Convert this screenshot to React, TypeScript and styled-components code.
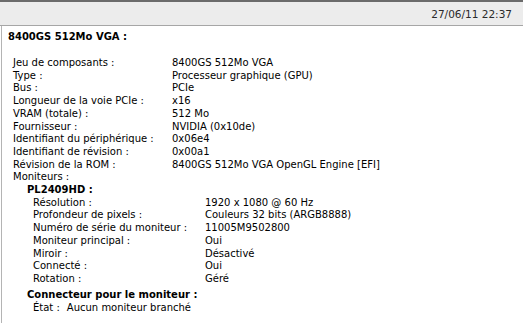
import React from 'react'
import styled, { createGlobalStyle } from 'styled-components'

const GlobalStyle = createGlobalStyle`
  html, body {
    margin: 0;
    padding: 0;
    background: #fff;
  }
  body {
    font-family: 'DejaVu Sans', 'Liberation Sans', sans-serif;
    font-size: 10px;
    color: #000;
  }
`;

type Row = [string, string];

const gpuRows: Row[] = [
  ['Jeu de composants :', '8400GS 512Mo VGA'],
  ['Type :', 'Processeur graphique (GPU)'],
  ['Bus :', 'PCIe'],
  ['Longueur de la voie PCIe :', 'x16'],
  ['VRAM (totale) :', '512 Mo'],
  ['Fournisseur :', 'NVIDIA (0x10de)'],
  ['Identifiant du périphérique :', '0x06e4'],
  ['Identifiant de révision :', '0x00a1'],
  ['Révision de la ROM :', '8400GS 512Mo VGA OpenGL Engine [EFI]'],
];

const displayRows: Row[] = [
  ['Résolution :', '1920 x 1080 @ 60 Hz'],
  ['Profondeur de pixels :', 'Couleurs 32 bits (ARGB8888)'],
  ['Numéro de série du moniteur :', '11005M9502800'],
  ['Moniteur principal :', 'Oui'],
  ['Miroir :', 'Désactivé'],
  ['Connecté :', 'Oui'],
  ['Rotation :', 'Géré'],
];

const App = () => (
  <>
    <GlobalStyle />
    <Window>
      <TopBar>
        <Stamp>27/06/11 22:37</Stamp>
      </TopBar>
      <Content>
        <Title>8400GS 512Mo VGA :</Title>
        <Section>
          <Table labelWidth={159} indent={13}>
            {gpuRows.map(([k, v]) => (
              <React.Fragment key={k}>
                <Label>{k}</Label>
                <Value>{v}</Value>
              </React.Fragment>
            ))}
            <Label>Moniteurs :</Label>
            <Value />
          </Table>
          <Heading indent={27}>PL2409HD :</Heading>
          <Table labelWidth={172} indent={33}>
            {displayRows.map(([k, v]) => (
              <React.Fragment key={k}>
                <Label>{k}</Label>
                <Value>{v}</Value>
              </React.Fragment>
            ))}
          </Table>
          <Heading indent={27} spaced>Connecteur pour le moniteur :</Heading>
          <InlineRow indent={33}>
            <Label>État :</Label>
            <Value>Aucun moniteur branché</Value>
          </InlineRow>
        </Section>
      </Content>
    </Window>
  </>
)

const Window = styled.div`
  width: 523px;
  height: 323px;
  display: flex;
  flex-direction: column;
  overflow: hidden;
`;

const TopBar = styled.div`
  height: 23px;
  flex: none;
  display: flex;
  align-items: center;
  justify-content: flex-end;
  padding-right: 11px;
  background: #ececec;
  border-top: 2px solid #6b6b6b;
  border-bottom: 1px solid #a6a6a6;
`;

const Stamp = styled.span`
  font-size: 10.5px;
  color: #2a2a2a;
  padding-top: 1px;
`;

const Content = styled.div`
  flex: 1;
  border-left: 1px solid #b4b4b4;
  margin-left: 1px;
  padding-top: 4px;
`;

const Title = styled.div`
  font-weight: bold;
  padding-left: 6px;
  line-height: 13px;
`;

const Section = styled.div`
  padding-top: 14px;
  line-height: 12.7px;
`;

const Table = styled.div<{ labelWidth: number; indent: number }>`
  display: grid;
  grid-template-columns: ${p => p.labelWidth}px 1fr;
  padding-left: ${p => p.indent - 2}px;
`;

const Label = styled.span`
  white-space: nowrap;
`;

const Value = styled.span`
  white-space: nowrap;
`;

const Heading = styled.div<{ indent: number; spaced?: boolean }>`
  font-weight: bold;
  padding-left: ${p => p.indent - 2}px;
  margin-top: ${p => (p.spaced ? 3 : 0)}px;
`;

const InlineRow = styled.div<{ indent: number }>`
  display: flex;
  gap: 7px;
  padding-left: ${p => p.indent - 2}px;
  padding-top: 1px;
`;

export default App
